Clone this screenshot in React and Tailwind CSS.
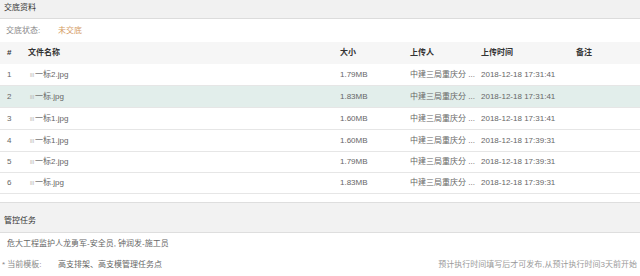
import React from "react";

const rows = [
  ["1", "一标2.jpg", "1.79MB", "2018-12-18 17:31:41", false, "h-[22px]"],
  ["2", "一标.jpg", "1.83MB", "2018-12-18 17:31:41", true, "h-[22px]"],
  ["3", "一标1.jpg", "1.60MB", "2018-12-18 17:31:41", false, "h-[22px]"],
  ["4", "一标1.jpg", "1.60MB", "2018-12-18 17:39:31", false, "h-[22px]"],
  ["5", "一标2.jpg", "1.79MB", "2018-12-18 17:39:31", false, "h-[21px]"],
  ["6", "一标.jpg", "1.83MB", "2018-12-18 17:39:31", false, "h-[21px]"],
];

const grid = "grid grid-cols-[23px_310px_70px_71px_95px_1fr] items-center pl-[7px]";

export default function App() {
  return (
    <div
      className="w-[640px] h-[276px] overflow-hidden bg-white text-[8px] text-[#666] leading-none"
      style={{ fontFamily: '"Liberation Sans", "Noto Sans CJK SC", sans-serif' }}
    >
      <div className="h-[19px] bg-[#f1f1f1] border-b border-[#dcdcdc] flex items-center pl-[4px] pb-[3px] text-[#333]">
        交底资料
      </div>
      <div className="h-[23px] flex items-center">
        <span className="pl-[6px] w-[58px] text-[#888]">交底状态:</span>
        <span className="text-[#d49a63]">未交底</span>
      </div>
      <div className={`${grid} h-[22px] bg-[#f6f6f6] text-[#333] font-semibold`}>
        <span>#</span>
        <span className="-ml-[2px]">文件名称</span>
        <span>大小</span>
        <span>上传人</span>
        <span>上传时间</span>
        <span>备注</span>
      </div>
      {rows.map(([n, name, size, time, hl, h]) => (
        <div
          key={n}
          className={`${grid} ${h} border-b border-[#e6e6e6] ${hl ? "bg-[#e2eeeb]" : "bg-white"}`}
        >
          <span>{n}</span>
          <span className="flex items-center">
            <span className="text-[6px] text-[#b5b5b5] mr-[1px]">lll</span>
            {name}
          </span>
          <span>{size}</span>
          <span className="whitespace-nowrap">中建三局重庆分 ...</span>
          <span>{time}</span>
          <span></span>
        </div>
      ))}
      <div className="h-[8px]" />
      <div className="h-[31px] bg-[#f2f2f2] border-y border-[#dedede] flex items-center pl-[4px] pt-[6px] text-[#333]">
        管控任务
      </div>
      <div className="h-[20px] flex items-center pl-[7px] pt-[2px]">
        危大工程监护人龙勇军-安全员, 钟润发-施工员
      </div>
      <div className="h-[24px] flex items-center pb-[1px]">
        <span className="pl-[2px] w-[58px] text-[#888]">* 当前模板:</span>
        <span>高支排架、高支模管理任务点</span>
        <span className="ml-auto pr-[3px] text-[#999]">
          预计执行时间填写后才可发布,从预计执行时间3天前开始
        </span>
      </div>
    </div>
  );
}
